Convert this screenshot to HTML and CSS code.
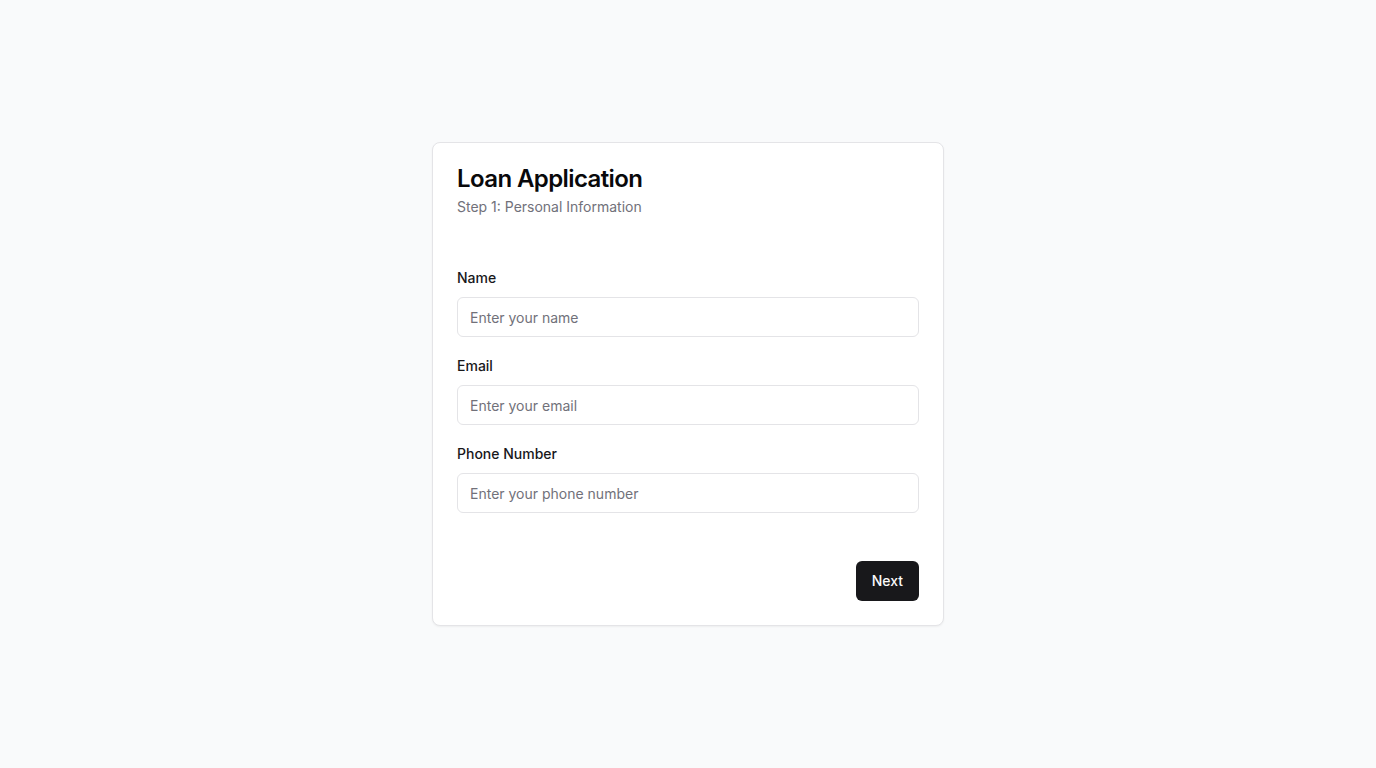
FILE: index.html
```html
<!DOCTYPE html>
<html lang="en">
<head>
<meta charset="utf-8">
<title>Loan Application</title>
<link rel="stylesheet" href="styles.css">
</head>
<body>
<main class="page">
  <section class="card">
    <header class="card-header">
      <h1 class="card-title">Loan Application</h1>
      <p class="card-desc">Step 1: Personal Information</p>
    </header>
    <form class="card-content">
      <div class="field">
        <label class="label" for="name">Name</label>
        <input class="input" id="name" type="text" placeholder="Enter your name">
      </div>
      <div class="field">
        <label class="label" for="email">Email</label>
        <input class="input" id="email" type="email" placeholder="Enter your email">
      </div>
      <div class="field">
        <label class="label" for="phone">Phone Number</label>
        <input class="input" id="phone" type="tel" placeholder="Enter your phone number">
      </div>
    </form>
    <footer class="card-footer">
      <button class="btn" type="button">Next</button>
    </footer>
  </section>
</main>
</body>
</html>
```
FILE: styles.css
```css
* { box-sizing: border-box; }
html, body { margin: 0; padding: 0; }
body {
  background: #f9fafb;
  font-family: Inter, "Noto Sans", sans-serif;
  color: #09090b;
}
.page {
  min-height: 768px;
  display: flex;
  align-items: center;
  justify-content: center;
}
.card {
  width: 512px;
  background: #ffffff;
  border: 1px solid #e4e4e7;
  border-radius: 8px;
  box-shadow: 0 1px 2px rgba(0,0,0,0.05);
}
.card-header {
  padding: 24px;
  display: flex;
  flex-direction: column;
  gap: 6px;
}
.card-title {
  margin: 0;
  font-size: 24px;
  line-height: 24px;
  font-weight: 600;
  letter-spacing: -0.6px;
}
.card-desc {
  margin: 0;
  font-size: 14px;
  line-height: 20px;
  color: #71717a;
}
.card-content {
  margin: 0;
  padding: 27px 24px 0;
  display: flex;
  flex-direction: column;
  gap: 19px;
}
.field {
  display: flex;
  flex-direction: column;
  gap: 9px;
}
.label {
  font-size: 14px;
  line-height: 20px;
  font-weight: 500;
  color: #18181b;
}
.input {
  height: 40px;
  width: 100%;
  border: 1px solid #e4e4e7;
  border-radius: 6px;
  padding: 8px 12px;
  font-family: inherit;
  font-size: 14px;
  color: #09090b;
  background: #ffffff;
  outline: none;
}
.input::placeholder { color: #71717a; }
.card-footer {
  padding: 48px 24px 24px;
  display: flex;
  justify-content: flex-end;
}
.btn {
  height: 40px;
  padding: 0 16px 2px;
  border: none;
  border-radius: 6px;
  background: #18181b;
  color: #fafafa;
  font-family: inherit;
  font-size: 14px;
  font-weight: 500;
  cursor: pointer;
}
```
